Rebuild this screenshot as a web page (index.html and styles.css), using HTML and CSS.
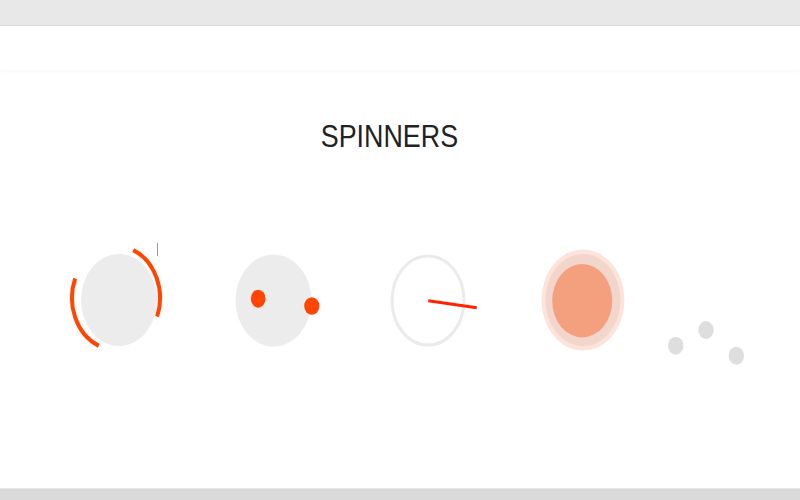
FILE: index.html
```html
<!DOCTYPE html>
<html>
<head>
<meta charset="utf-8">
<title>Spinners</title>
<link rel="stylesheet" href="styles.css">
</head>
<body>
<div class="topbar"></div>
<header class="header"></header>
<main class="main">
  <h1 class="title">SPINNERS</h1>
  <div class="spinners">
    <div class="spinner">
      <svg width="154" height="120" viewBox="0 0 154 120">
        <ellipse cx="77" cy="60" rx="38" ry="46" fill="#ececec"/>
        <path d="M 91.2 10.1 A 44 52 0 0 1 115.1 76.6" fill="none" stroke="#ff4500" stroke-width="4"/>
        <path d="M 56.8 105.9 A 44 52 0 0 1 33.2 38.5" fill="none" stroke="#ff4500" stroke-width="4"/>
        <line x1="115.5" y1="3" x2="115.5" y2="16" stroke="#9a9a9a" stroke-width="1"/>
      </svg>
    </div>
    <div class="spinner">
      <svg width="154" height="120" viewBox="0 0 154 120">
        <ellipse cx="76.5" cy="60.5" rx="38" ry="46" fill="#ececec"/>
        <ellipse cx="61.2" cy="58.7" rx="7.3" ry="9" fill="#ff4500"/>
        <ellipse cx="114.8" cy="66" rx="7.6" ry="8.8" fill="#ff4500"/>
      </svg>
    </div>
    <div class="spinner">
      <svg width="154" height="120" viewBox="0 0 154 120">
        <ellipse cx="77" cy="60.5" rx="36" ry="44.5" fill="none" stroke="#ebebeb" stroke-width="3"/>
        <line x1="77.3" y1="60.7" x2="125.7" y2="67.7" stroke="#ff2200" stroke-width="3"/>
      </svg>
    </div>
    <div class="spinner">
      <svg width="154" height="120" viewBox="0 0 154 120">
        <ellipse cx="77" cy="60" rx="41.5" ry="50.5" fill="#fde3da"/>
        <ellipse cx="77" cy="60" rx="37.5" ry="46" fill="#f2d5cb"/>
        <ellipse cx="76.2" cy="60.7" rx="30" ry="36.7" fill="#f4a07e"/>
      </svg>
    </div>
    <div class="spinner">
      <svg width="154" height="120" viewBox="0 0 154 120">
        <ellipse cx="15.7" cy="105.7" rx="7.7" ry="9" fill="#dedede"/>
        <ellipse cx="46" cy="90" rx="7.7" ry="9" fill="#dedede"/>
        <ellipse cx="76.3" cy="115.7" rx="7.7" ry="9" fill="#dedede"/>
      </svg>
    </div>
  </div>
</main>
<footer class="footer"></footer>
</body>
</html>
```
FILE: styles.css
```css
html, body {
  margin: 0;
  padding: 0;
}
body {
  height: 500px;
  display: flex;
  flex-direction: column;
  background: #ffffff;
  font-family: "Liberation Sans", Arial, sans-serif;
  overflow: hidden;
}
.topbar {
  height: 25px;
  background: #e8e8e8;
  border-bottom: 1px solid #dcdcdc;
  flex: 0 0 auto;
}
.header {
  height: 44px;
  background: #ffffff;
  box-shadow: 0 1px 4px rgba(0, 0, 0, 0.04);
  flex: 0 0 auto;
  position: relative;
  z-index: 1;
}
.main {
  flex: 1 1 auto;
  padding-top: 50px;
  box-sizing: border-box;
}
.title {
  margin: 0;
  font-size: 32px;
  line-height: 32px;
  font-weight: normal;
  color: #222222;
  text-align: center;
  transform: scaleX(0.84);
  transform-origin: 389px 0;
  padding-right: 21px;
}
.spinners {
  display: flex;
  margin-top: 88px;
  padding-left: 42px;
}
.spinner {
  flex: 0 0 154.5px;
  height: 120px;
}
.spinner svg {
  display: block;
  overflow: visible;
}
.footer {
  height: 11px;
  background: #dadada;
  border-top: 1px solid #e6e6e6;
  flex: 0 0 auto;
}
```
